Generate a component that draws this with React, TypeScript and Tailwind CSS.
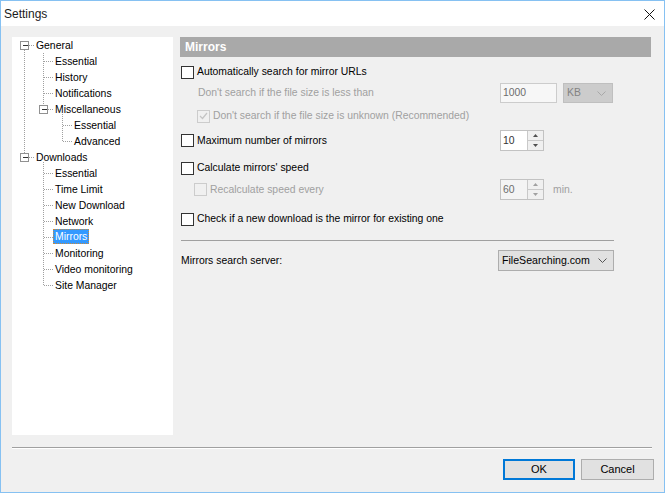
import React from "react";

const font = { fontFamily: '"Liberation Sans", Arial, sans-serif' };

type Node = { label: string; level: number; selected?: boolean };

const tree: Node[] = [
  { label: "General", level: 0 },
  { label: "Essential", level: 1 },
  { label: "History", level: 1 },
  { label: "Notifications", level: 1 },
  { label: "Miscellaneous", level: 1 },
  { label: "Essential", level: 2 },
  { label: "Advanced", level: 2 },
  { label: "Downloads", level: 0 },
  { label: "Essential", level: 1 },
  { label: "Time Limit", level: 1 },
  { label: "New Download", level: 1 },
  { label: "Network", level: 1 },
  { label: "Mirrors", level: 1, selected: true },
  { label: "Monitoring", level: 1 },
  { label: "Video monitoring", level: 1 },
  { label: "Site Manager", level: 1 },
];

const indent = ["pl-[22px]", "pl-[41px]", "pl-[60px]"];

// row centre in the tree panel
const cy = (i: number) => 8 + 16 * i + 0.5;

function Expander({ x, y }: { x: number; y: number }) {
  return (
    <g>
      <rect x={x - 4.5} y={y - 4.5} width={8} height={8} fill="#fff" stroke="#919191" />
      <line x1={x - 2} y1={y - 0.5} x2={x + 3} y2={y - 0.5} stroke="#333" />
    </g>
  );
}

function TreeLines() {
  const dot = { stroke: "#a0a0a0", strokeDasharray: "1 1" };
  const h = (x1: number, x2: number, i: number) => (
    <line key={`h${i}-${x1}`} x1={x1} y1={cy(i)} x2={x2} y2={cy(i)} {...dot} />
  );
  return (
    <svg className="absolute inset-0 pointer-events-none" width={161} height={398} shapeRendering="crispEdges">
      {/* root */}
      <line x1={12.5} y1={13} x2={12.5} y2={116} {...dot} />
      {h(17, 22, 0)}
      {h(17, 22, 7)}
      {/* General children */}
      <line x1={31.5} y1={16} x2={31.5} y2={68} {...dot} />
      {[1, 2, 3].map((i) => h(32, 41, i))}
      {h(36, 41, 4)}
      {/* Miscellaneous children */}
      <line x1={50.5} y1={77} x2={50.5} y2={104} {...dot} />
      {[5, 6].map((i) => h(51, 60, i))}
      {/* Downloads children */}
      <line x1={31.5} y1={125} x2={31.5} y2={248} {...dot} />
      {[8, 9, 10, 11, 12, 13, 14, 15].map((i) => h(32, 41, i))}
      <Expander x={12.5} y={8.5} />
      <Expander x={12.5} y={120.5} />
      <Expander x={31.5} y={72.5} />
    </svg>
  );
}

function Check({ checked, disabled }: { checked?: boolean; disabled?: boolean }) {
  return (
    <span
      className={`w-[13px] h-[13px] border shrink-0 flex items-center justify-center ${
        disabled ? "border-[#cccccc] bg-[#f0f0f0]" : "border-[#333333] bg-white"
      }`}
    >
      {checked && (
        <svg width="9" height="8" viewBox="0 0 9 8">
          <polyline points="1,4 3.5,6.5 8,1" fill="none" stroke={disabled ? "#c4c4c4" : "#333"} strokeWidth="1.2" />
        </svg>
      )}
    </span>
  );
}

function Chevron({ color }: { color: string }) {
  return (
    <svg width="9" height="5" viewBox="0 0 9 5">
      <polyline points="0.5,0.5 4.5,4.5 8.5,0.5" fill="none" stroke={color} />
    </svg>
  );
}

function Spinner({ value, disabled }: { value: string; disabled?: boolean }) {
  const tri = disabled ? "#a0a0a0" : "#505050";
  return (
    <div className={`w-[44px] h-[21px] border border-[#c2c2c2] flex ${disabled ? "bg-[#f4f4f4]" : "bg-white"}`}>
      <span className={`flex-1 pl-[2px] leading-[19px] ${disabled ? "text-[#6d6d6d]" : "text-[#333]"}`}>{value}</span>
      <div className="w-[16px] flex flex-col">
        <span className="flex-1 border-l border-b border-[#c9c9c9] bg-[#f0f0f0] flex items-center justify-center">
          <svg width="5" height="3" viewBox="0 0 5 3">
            <polygon points="0,3 2.5,0 5,3" fill={tri} />
          </svg>
        </span>
        <span className="flex-1 border-l border-[#c9c9c9] bg-[#f0f0f0] flex items-center justify-center">
          <svg width="5" height="3" viewBox="0 0 5 3">
            <polygon points="0,0 2.5,3 5,0" fill={tri} />
          </svg>
        </span>
      </div>
    </div>
  );
}

export default function App() {
  return (
    <div
      className="w-[665px] h-[493px] border border-[#86c1f2] bg-[#f0f0f0] flex flex-col text-[10.4px] text-black"
      style={font}
    >
      {/* title bar */}
      <div className="h-[25px] bg-white flex items-center justify-between shrink-0">
        <span className="pl-[3px] text-[12px] text-[#1a1a1a]">Settings</span>
        <svg width="11" height="11" viewBox="0 0 11 11" className="mr-[9px] mt-[1px]">
          <path d="M0.5 0.5 L10.5 10.5 M10.5 0.5 L0.5 10.5" stroke="#111" strokeWidth="1" />
        </svg>
      </div>

      <div className="flex-1 flex flex-col pl-[11px] pt-[11px]">
        <div className="flex gap-[7px] h-[398px]">
          {/* tree */}
          <div className="relative w-[161px] bg-white">
            <TreeLines />
            {tree.map((n, i) => (
              <div key={i} className={`h-[16px] flex items-start ${indent[n.level]}`}>
                <span
                  className={`h-[15px] leading-[14px] flex items-center ${
                    n.selected
                      ? "bg-[#3399ff] text-white border border-dotted border-[#cc8a3a] px-[1px]"
                      : "px-[2px] pt-[2px]"
                  }`}
                >
                  {n.label}
                </span>
              </div>
            ))}
          </div>

          {/* page */}
          <div className="w-[471px] flex flex-col">
            <div className="h-[20px] bg-[#a9a9a9] flex items-center pl-[5px] text-[12px] font-bold text-white">
              Mirrors
            </div>

            <div className="mt-[5px] h-[20px] flex items-center pl-[1px] gap-[3px]">
              <Check />
              <span>Automatically search for mirror URLs</span>
            </div>

            <div className="mt-[1px] h-[20px] flex items-center">
              <span className="w-[320px] pl-[18px] text-[#a0a0a0]">Don't search if the file size is less than</span>
              <span className="w-[57px] h-[20px] border border-[#cccccc] bg-[#f7f7f7] text-[#6d6d6d] pl-[2px] leading-[18px]">
                1000
              </span>
              <span className="ml-[6px] w-[50px] h-[20px] border border-[#bfbfbf] bg-[#cccccc] text-[#838383] flex items-center justify-between pl-[3px] pr-[6px]">
                KB
                <Chevron color="#a8a8a8" />
              </span>
            </div>

            <div className="mt-[3px] h-[20px] flex items-center pl-[17px] gap-[3px] text-[#a0a0a0]">
              <Check checked disabled />
              <span>Don't search if the file size is unknown (Recommended)</span>
            </div>

            <div className="mt-[4px] h-[21px] flex items-center">
              <span className="w-[320px] pl-[1px] flex items-center gap-[3px]">
                <Check />
                <span>Maximum number of mirrors</span>
              </span>
              <Spinner value="10" />
            </div>

            <div className="mt-[7px] h-[20px] flex items-center pl-[1px] gap-[3px]">
              <Check />
              <span>Calculate mirrors' speed</span>
            </div>

            <div className="mt-[1px] h-[21px] flex items-center">
              <span className="w-[320px] pl-[14px] flex items-center gap-[3px] text-[#a0a0a0]">
                <Check disabled />
                <span>Recalculate speed every</span>
              </span>
              <Spinner value="60" disabled />
              <span className="ml-[9px] text-[#a0a0a0]">min.</span>
            </div>

            <div className="mt-[9px] h-[20px] flex items-center pl-[1px] gap-[3px]">
              <Check />
              <span>Check if a new download is the mirror for existing one</span>
            </div>

            <div className="mt-[11px] ml-[1px] w-[433px] h-px bg-[#a0a0a0]" />

            <div className="mt-[9px] h-[21px] flex items-center">
              <span className="w-[318px] pl-[1px]">Mirrors search server:</span>
              <span className="w-[116px] h-[21px] border border-[#adadad] bg-[#e1e1e1] flex items-center justify-between pl-[3px] pr-[6px] text-[10.6px]">
                FileSearching.com
                <Chevron color="#555" />
              </span>
            </div>
          </div>
        </div>

        <div className="mt-[12px] mr-[12px] h-[2px] border-t border-[#a0a0a0] border-b border-b-white" />

        <div className="mt-[10px] pr-[10px] flex justify-end gap-[6px]">
          <button className="w-[72px] h-[21px] border-2 border-[#0078d7] bg-[#e1e1e1] text-[11px]">OK</button>
          <button className="w-[73px] h-[21px] border border-[#adadad] bg-[#e1e1e1] text-[11px]">Cancel</button>
        </div>
      </div>
    </div>
  );
}
